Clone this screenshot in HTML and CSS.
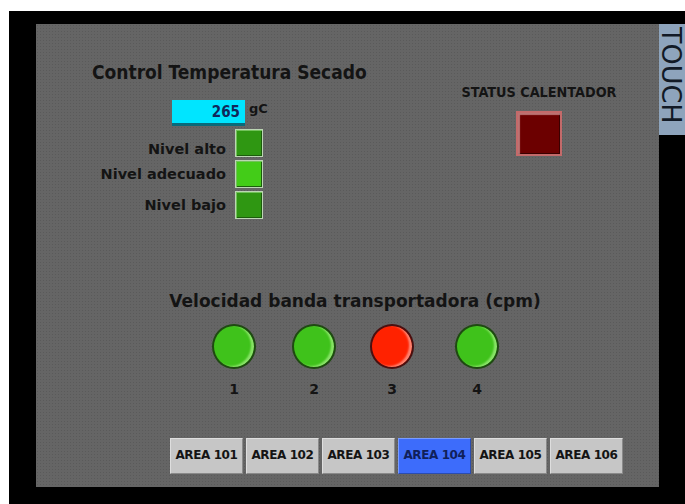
FILE: index.html
```html
<!DOCTYPE html>
<html lang="es">
<head>
    <meta charset="UTF-8">
    <meta name="viewport" content="width=device-width, initial-scale=1.0">
    <title>Control Temperatura Secado</title>
    <link rel="stylesheet" href="styles.css">
</head>
<body>
    <div class="frame">
        <div class="panel">
            <div class="top">
                <div class="temp">
                    <h2 class="title">Control Temperatura Secado</h2>
                    <div class="setpoint">
                        <span class="value">265</span>
                        <span class="unit">gC</span>
                    </div>
                    <div class="levels">
                        <span class="label first">Nivel alto</span><span class="led"></span>
                        <span class="label">Nivel adecuado</span><span class="led on"></span>
                        <span class="label">Nivel bajo</span><span class="led"></span>
                    </div>
                </div>
                <div class="status">
                    <div class="status-label">STATUS CALENTADOR</div>
                    <div class="heater"></div>
                </div>
            </div>

            <div class="speed">
                <h2 class="speed-title">Velocidad banda transportadora (cpm)</h2>
                <div class="lamps">
                    <div class="lamp"><span class="bulb"></span><span class="num">1</span></div>
                    <div class="lamp"><span class="bulb"></span><span class="num">2</span></div>
                    <div class="lamp"><span class="bulb red"></span><span class="num">3</span></div>
                    <div class="lamp"><span class="bulb"></span><span class="num">4</span></div>
                </div>
            </div>

            <div class="tabs">
                <button class="tab">AREA 101</button>
                <button class="tab">AREA 102</button>
                <button class="tab">AREA 103</button>
                <button class="tab active">AREA 104</button>
                <button class="tab">AREA 105</button>
                <button class="tab">AREA 106</button>
            </div>
        </div>
        <div class="touch">TOUCH</div>
    </div>
</body>
</html>
```

FILE: styles.css
```css
body {
    margin: 0;
    padding: 0;
    background-color: white;
    font-family: "DejaVu Sans", sans-serif;
    color: #111;
}
.frame {
    display: flex;
    align-items: flex-start;
    margin: 11px 0 0 9px;
    height: 493px;
    padding: 13px 0 0 27px;
    box-sizing: border-box;
    background-color: black;
}
.panel {
    width: 623px;
    height: 463px;
    flex-shrink: 0;
    background-color: #656565;
    background-image: radial-gradient(#5a5a5a 0.7px, transparent 0.9px);
    background-size: 3px 3px;
}
.touch {
    width: 26px;
    height: 111px;
    overflow: hidden;
    background-color: #8ea4bc;
    color: #121a26;
    writing-mode: vertical-rl;
    font-size: 27px;
    line-height: 23px;
    padding: 3px 2px 0 0;
    box-sizing: border-box;
    white-space: nowrap;
}

/* zona superior */
.top {
    display: flex;
    padding-top: 37px;
}
.temp {
    width: 413px;
    padding-left: 56px;
    box-sizing: border-box;
}
.title {
    margin: 0;
    font-family: "DejaVu Sans Condensed", "DejaVu Sans", sans-serif;
    font-stretch: condensed;
    font-size: 19px;
    line-height: 22px;
    font-weight: bold;
    color: #141414;
}
.setpoint {
    display: flex;
    align-items: flex-start;
    margin: 17px 0 0 80px;
}
.value {
    width: 73px;
    height: 26px;
    box-sizing: border-box;
    background-color: #00e5ff;
    border-bottom: 3px solid #0a6a7a;
    padding-right: 5px;
    text-align: right;
    font-family: "DejaVu Sans Condensed", "DejaVu Sans", sans-serif;
    font-stretch: condensed;
    font-weight: bold;
    font-size: 15px;
    line-height: 24px;
    color: #10285a;
}
.unit {
    margin-left: 4px;
    font-weight: bold;
    font-size: 13px;
    line-height: 18px;
    color: #141414;
}
.levels {
    display: grid;
    grid-template-columns: 134px 28px;
    column-gap: 9px;
    row-gap: 3px;
    margin-top: 3px;
}
.label {
    text-align: right;
    font-weight: bold;
    font-size: 14.5px;
    line-height: 28px;
    color: #141414;
    white-space: nowrap;
}
.label.first {
    line-height: 40px;
    height: 28px;
}
.led {
    width: 28px;
    height: 28px;
    box-sizing: border-box;
    background-color: #2f9712;
    border: 1px solid #bcd6b4;
    box-shadow: inset 1px 1px 0 #72c25a, inset -1px -1px 0 #1c5c0c;
}
.led.on {
    background-color: #43cc18;
}
.status {
    width: 180px;
    padding-top: 23px;
    display: flex;
    flex-direction: column;
    align-items: center;
}
.status-label {
    font-family: "DejaVu Sans Condensed", "DejaVu Sans", sans-serif;
    font-stretch: condensed;
    font-weight: bold;
    font-size: 14.3px;
    line-height: 16px;
    color: #141414;
}
.heater {
    width: 46px;
    height: 45px;
    margin-top: 11px;
    box-sizing: border-box;
    background-color: #6c0000;
    border: 2px solid #c46a6a;
    box-shadow: inset 2px 2px 1px rgba(255, 210, 210, 0.55), inset -1px -1px 0 #3a0000;
}

/* velocidad */
.speed {
    margin-top: 72px;
}
.speed-title {
    margin: 0;
    padding-left: 15px;
    text-align: center;
    font-size: 17px;
    line-height: 20px;
    font-weight: bold;
    color: #141414;
}
.lamps {
    display: grid;
    grid-template-columns: 80px 78px 85px 44px;
    padding-left: 176px;
    margin-top: 13px;
}
.lamp {
    width: 44px;
    display: flex;
    flex-direction: column;
    align-items: center;
}
.bulb {
    width: 44px;
    height: 45px;
    box-sizing: border-box;
    border-radius: 50%;
    border: 2px solid #1f4a12;
    background-color: #3fc21b;
    box-shadow: inset -3px -1px 2px rgba(200, 255, 170, 0.55);
}
.bulb.red {
    border-color: #4a1010;
    background-color: #ff2200;
    box-shadow: inset -3px -1px 2px rgba(255, 200, 190, 0.6);
}
.num {
    margin-top: 12px;
    font-weight: bold;
    font-size: 14px;
    line-height: 16px;
    color: #141414;
}

/* botones de area */
.tabs {
    display: flex;
    align-items: flex-start;
    gap: 3px;
    padding-left: 134px;
    margin-top: 41px;
}
.tab {
    width: 73px;
    padding: 9px 0 11px;
    box-sizing: border-box;
    background-color: #c6c6c6;
    border: 1px solid;
    border-color: #dedede #8a8a8a #8a8a8a #dedede;
    font-family: "DejaVu Sans", sans-serif;
    font-weight: bold;
    font-size: 12px;
    line-height: 14px;
    letter-spacing: -0.4px;
    color: #141414;
    text-align: center;
    white-space: nowrap;
}
.tab.active {
    background-color: #3d6cfb;
    border-color: #7a9cff #2a4cb0 #2a4cb0 #7a9cff;
    color: #10205a;
}
```
